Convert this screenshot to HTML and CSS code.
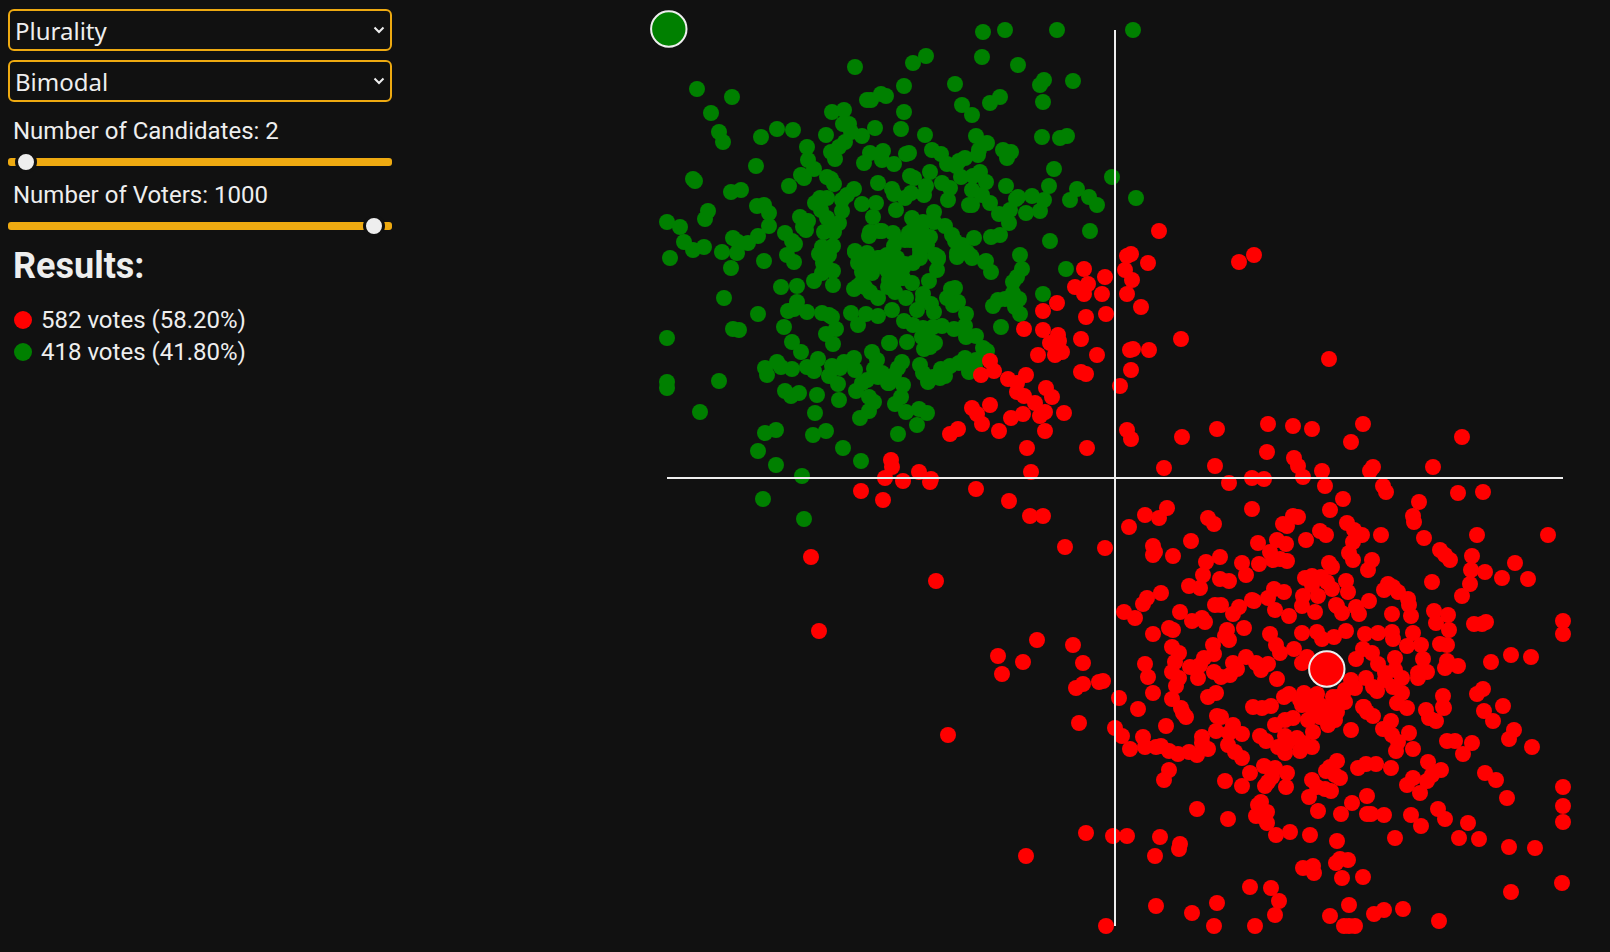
FILE: index.html
```html
<!DOCTYPE html>
<html lang="en">
<head>
  <meta charset="UTF-8">
  <title>Voting Simulator</title>
  <link rel="stylesheet" href="styles.css">
</head>
<body>
<div class="sidebar">
	<select class="picker" id="method" aria-label="Voting method">
		<option>Plurality</option>
		<option>Approval</option>
		<option>Borda</option>
	</select>
	<select class="picker" id="distribution" aria-label="Voter distribution">
		<option>Bimodal</option>
		<option>Normal</option>
		<option>Uniform</option>
	</select>
	<div class="sliders">
		<div class="control">
			<label for="candidates">Number of Candidates: 2</label>
			<input type="range" id="candidates" min="0" max="100" value="2">
		</div>
		<div class="control">
			<label for="voters">Number of Voters: 1000</label>
			<input type="range" id="voters" min="0" max="1020" value="1000">
		</div>
	</div>
	<h1>Results:</h1>
	<ul class="results">
		<li><span class="dot red"></span>582 votes (58.20%)</li>
		<li><span class="dot green"></span>418 votes (41.80%)</li>
	</ul>
</div>
<div class="plot">
	<svg id="plot" viewBox="0 0 952 952">
		<g id="green" class="green"></g>
		<g id="red" class="red"></g>
		<line class="axis" x1="27" y1="478" x2="923" y2="478"/>
		<line class="axis" x1="475" y1="30" x2="475" y2="926"/>
		<circle class="candidate green" cx="28.8" cy="29" r="17.7"/>
		<circle class="candidate red" cx="686.8" cy="669" r="17.7"/>
	</svg>
</div>
<script src="plot.js"></script>
</body>
</html>
```

FILE: styles.css
```css
* {
	box-sizing: border-box;
}

body {
	margin: 0;
	min-height: 100vh;
	display: flex;
	justify-content: space-between;
	background: #111;
	color: #eee;
	font: 24px Roboto, sans-serif;
}

.sidebar {
	width: 400px;
	flex: none;
	padding: 9px 8px;
}

.picker {
	-webkit-appearance: none;
	appearance: none;
	display: block;
	width: 100%;
	height: 42px;
	margin-bottom: 9px;
	padding: 0 22px 0 5px;
	background: #111 url("data:image/svg+xml,%3Csvg xmlns='http://www.w3.org/2000/svg' width='12' height='8'%3E%3Cpath d='M1.5 1.5L6 6L10.5 1.5' fill='none' stroke='%23eee' stroke-width='2'/%3E%3C/svg%3E") no-repeat right 5px center;
	color: #eee;
	border: 2px solid #eeaa11;
	border-radius: 6px;
	font: 24px "Noto Sans", sans-serif;
}

.control {
	padding-bottom: 2px;
}

.control label {
	display: block;
	padding-left: 5px;
	line-height: 40px;
}

.control input {
	-webkit-appearance: none;
	appearance: none;
	display: block;
	width: 100%;
	height: 22px;
	margin: 0;
	background: transparent;
}

.control input::-webkit-slider-runnable-track {
	height: 8px;
	background: #eeaa11;
	border-radius: 3px;
}

.control input::-webkit-slider-thumb {
	-webkit-appearance: none;
	width: 22px;
	height: 22px;
	margin-top: -7px;
	background: #eee;
	border: 3px solid #111;
	border-radius: 50%;
}

h1 {
	margin: 6px 0 17px 5px;
	font-size: 36px;
	line-height: 42px;
}

.results {
	margin: 0;
	padding: 0 0 0 6px;
	list-style: none;
	line-height: 32px;
}

.results li {
	display: flex;
	align-items: center;
	gap: 9px;
}

.dot {
	width: 18px;
	height: 18px;
	border-radius: 50%;
}

.dot.red {
	background: red;
}

.dot.green {
	background: green;
}

.plot {
	padding-right: 18px;
}

.plot svg {
	display: block;
	height: 100vh;
	aspect-ratio: 1;
}

svg .red {
	fill: red;
}

svg .green {
	fill: green;
}

.axis {
	stroke: #eee;
	stroke-width: 2;
}

.candidate {
	stroke: #eee;
	stroke-width: 2;
}
```

FILE: plot.js
```js
// voter positions, "x,y" in plot units
var voters = {
	green: `
215,67 57,89 92,97 71,113 79,132 83,142 121,137 137,129 153,130 192,112 204,110 227,100 231,100 241,94 246,96
203,124 209,124 186,135 211,132 222,136 235,128 205,142 199,147 191,152 195,159 167,147 168,160 174,169 161,175
164,178 116,166 149,186 53,179 55,181 91,192 101,190 187,177 191,179 194,184 68,211 65,219 117,206 124,205
129,213 129,226 118,236 108,243 27,222 40,227 44,242 53,250 64,247 93,238 98,242 82,252 97,253 30,258 124,261
145,233 152,241 155,244 147,255 154,262 160,217 168,221 163,227 166,230 214,189 207,195 202,200 202,211 180,198
187,198 175,203 181,210 187,218 199,223 192,227 184,232 194,232 193,246 182,247 179,254 189,255 230,153 243,151
224,163 242,160 238,183 222,204 236,203 233,217 230,232 229,236 239,231 215,251 227,253 238,258
343,32 365,30 417,30 493,30 342,57 286,56 273,63 378,65 264,86 315,84 404,80 400,85 433,81 403,102 360,97
350,103 322,105 332,115 264,112 261,129 285,135 402,137 420,138 427,136 336,136 347,143 339,150 338,155 363,150
371,152 367,158 292,150 301,154 254,164 266,154 269,153 325,158 319,161 307,164 316,166 321,177 290,172 270,176
274,178 414,169 472,177 340,172 333,176 346,182 332,190 302,183 310,188 308,200 252,189 254,194 265,198 271,193
286,186 284,195 366,186 342,195 332,205 329,205 350,203 409,186 378,197 376,199 392,196 404,200 386,213 400,211
370,210 359,214 369,223 437,189 430,200 449,197 457,205 496,198 450,231 410,241 380,255 256,210 294,212 272,218
294,222 305,226 351,237 360,235 312,235 334,238 315,241 322,245 253,233 254,246 242,231 269,233 273,230 282,232
290,237 270,240 277,242 287,245 280,250 317,253 327,252 332,258 346,261 295,255 247,255 257,258 280,258 298,259
277,237 271,236 283,222 263,268 263,278 235,265 223,265
91,268 84,298 93,329 99,330 118,314 27,338 141,287 157,286 157,302 148,311 154,309 167,312 144,327 152,342
161,352 27,382 27,388 79,381 60,412 125,368 127,375 137,362 141,367 152,369 145,391 151,396 159,393 177,395
175,413 199,400 125,433 136,430 118,451 173,435 186,431 203,448 136,465 221,461 162,476 123,499 164,519
183,263 193,271 182,273 187,268 174,281 193,285 182,313 189,315 192,317 196,329 186,334 193,344 211,313 226,314
218,325 238,316 178,359 167,367 174,371 192,366 204,362 214,358 215,370 200,368 189,376 198,384 232,352 237,360
234,369 238,377 227,380 222,383 216,391 229,397 234,402 229,411 220,418 250,343 248,383 215,252 218,263 230,260
240,258 222,272 232,273 214,289 222,282 218,286 230,292 238,298 225,287 248,287 248,263 249,273
382,269 377,277 373,282 345,262 351,272 331,256 317,257 426,269 403,294 373,293 379,299 365,299 358,300 353,306
375,307 380,314 361,327 297,270 298,257 280,255 273,263 289,281 272,283 257,270 260,278 253,285 247,270
250,258 249,280 266,298 255,292 252,310 315,288 311,289 307,298 313,305 318,302 326,314 283,294 283,300 277,310
291,304 294,312 264,321 273,325 283,328 293,327 302,326 314,329 325,326 326,337 336,336 282,337 288,338 295,343
284,349 290,347 249,343 267,342 343,348 347,351 325,358 336,360 319,363 330,365 310,366 329,372 335,367 301,369
305,376 300,378 288,382 283,373 280,365 293,377 262,362 258,368 254,375 249,383 263,385 261,397 255,404 266,412
279,409 287,413 277,425 258,434 242,373 265,264 265,240`,
	red: `
221,491 243,500 444,269 465,277 448,284 435,287 444,294 462,294 417,303 403,311 446,317 466,314 384,329 403,330
418,335 410,343 419,341 415,346 422,352 415,355 398,355 441,339 457,355 441,372 446,374 350,361 354,371 341,375
368,379 386,375 377,383 377,392 384,396 406,388 412,397 395,403 405,412 400,416 350,405 332,408 337,414 342,424
318,429 310,434 359,431 371,418 383,414 424,413 405,431 387,448 447,448 391,472 480,386 251,460 252,467 245,478
263,481 279,472 291,479 290,482 336,489 369,501 390,516 403,516 425,547 465,548
519,231 491,254 487,256 508,263 485,270 492,280 487,294 501,307 599,262 614,255 541,339 689,359 490,350 493,349
509,350 491,370 487,430 491,439 542,437 524,468 577,429 575,466 628,424 653,426 672,429 627,452 654,458 658,466
663,477 682,471 723,424 711,442 733,467 730,471 822,437 793,467
589,483 612,478 624,479 685,486 527,508 505,515 519,518 489,527 513,546 515,552 513,555 533,556 551,541 568,518
574,524 612,509 690,510 653,516 658,517 643,524 647,526 618,543 637,540 646,544 666,540 680,531 686,535 630,552
633,560 647,561 640,559 619,564 602,563 606,575 580,557 566,562 563,575 560,588 549,586 580,579 589,581 521,593
507,598 503,604 484,612 495,618 540,612 575,605 581,605 599,607 593,614 612,600 614,601 634,589 644,592 628,598
635,610 649,616 665,578 672,576 681,577 689,563 692,567 687,582 692,589 672,585 663,596 678,596 662,606 675,612
697,606 604,628 587,630 585,636 589,640 552,621 562,618 565,622 529,628 533,630 513,634 630,634 636,645 640,653
662,633 677,632 682,639 694,637 532,647 539,653 535,662 532,672 539,678 536,686 532,699 505,664 508,677 513,693
479,698 463,681 498,709 573,645 574,654 564,658 560,665 550,667 558,678 574,672 581,677 590,675 597,669 593,663
606,657 616,663 621,670 628,664 654,649 662,663 667,657 637,679 576,693 568,697 649,694 644,697 613,707 622,708
631,706 664,693 677,694 660,700 693,697 672,702 680,705 688,712 697,712
743,486 746,492 703,499 818,493 843,492 779,502 773,516 774,522 784,538 741,535 837,535 908,535 707,523 714,530
722,535 713,542 709,553 713,560 732,560 728,570 800,550 805,555 810,560 832,556 831,570 845,572 830,584 822,596
862,578 875,563 888,579 792,582 748,584 744,590 758,592 753,587 768,599 769,605 771,616 752,614 706,581 708,592
729,601 716,607 719,614 696,605 702,613 794,611 808,615 796,623 809,630 834,624 842,624 846,622 923,621 923,634
706,631 725,634 738,633 752,632 753,639 773,633 767,646 781,645 783,659 723,649 732,653 716,659 738,664 755,658
800,644 807,645 807,661 805,668 818,666 851,662 871,655 891,657 787,672 778,678 778,673 755,670 745,673 762,678
745,680 753,687 762,693 737,691 733,687 726,678 711,680 715,688 803,696 803,707 843,689 837,694 863,706 844,711
786,710 757,703 767,708 724,707 697,697 705,702 705,690
475,728 482,736 490,749 503,737 505,747 516,747 521,746 529,751 538,754 549,752 557,755 562,737 568,749 562,743
526,726 541,708 543,713 546,717 577,716 581,717 576,731 593,725 589,733 602,734 588,745 595,752 602,758 620,736
626,741 635,725 645,720 653,718 662,705 673,710 668,720 680,717 688,725 695,720 693,707 673,732 645,736 657,738
638,747 645,753 660,751 672,747 663,743 647,743 529,770 524,780 585,781 610,773 602,786 624,766 635,768 632,777
628,782 625,786 647,773 646,787 672,780 669,797 677,787 685,789 691,791 686,771 690,767 697,761 695,775 557,809
588,819 621,802 618,805 627,812 616,816 623,817 627,823 636,835 650,832 670,835 678,811 473,836 487,836 520,837
515,856 540,844 539,849 663,868 673,866 674,873 610,887 631,888 639,901 635,915 516,906 552,913 577,903 574,926
615,926 690,916 466,926
711,730 700,778 723,707 727,712 733,716 751,721 743,729 752,735 769,733 758,742 756,751 773,749 804,708 789,718
796,721 807,741 815,741 832,743 823,754 853,721 874,730 869,739 892,747 845,773 856,780 867,798 923,787 923,806
923,822 922,883 871,892 718,768 726,764 736,764 751,768 788,762 801,770 792,775 787,781 773,778 767,785 780,793
712,803 727,796 701,814 727,814 731,814 744,815 771,815 781,826 798,809 805,819 828,823 819,838 839,839 869,847
895,848 755,838 697,841 700,859 708,860 696,863 702,878 723,877 709,905 734,914 744,910 763,909 799,921 704,926
709,926 715,926
171,557 296,581 179,631 397,640 358,656 362,674 383,662 433,645 443,663 436,688 443,684 459,682 439,723 308,735
446,833 386,856`
};

for (var party in voters) {
	var group = document.getElementById(party);
	var points = voters[party].trim().split(/\s+/);
	for (var i = 0; i < points.length; i++) {
		var xy = points[i].split(',');
		var circle = document.createElementNS('http://www.w3.org/2000/svg', 'circle');
		circle.setAttribute('cx', xy[0]);
		circle.setAttribute('cy', xy[1]);
		circle.setAttribute('r', 8);
		group.appendChild(circle);
	}
}
```
